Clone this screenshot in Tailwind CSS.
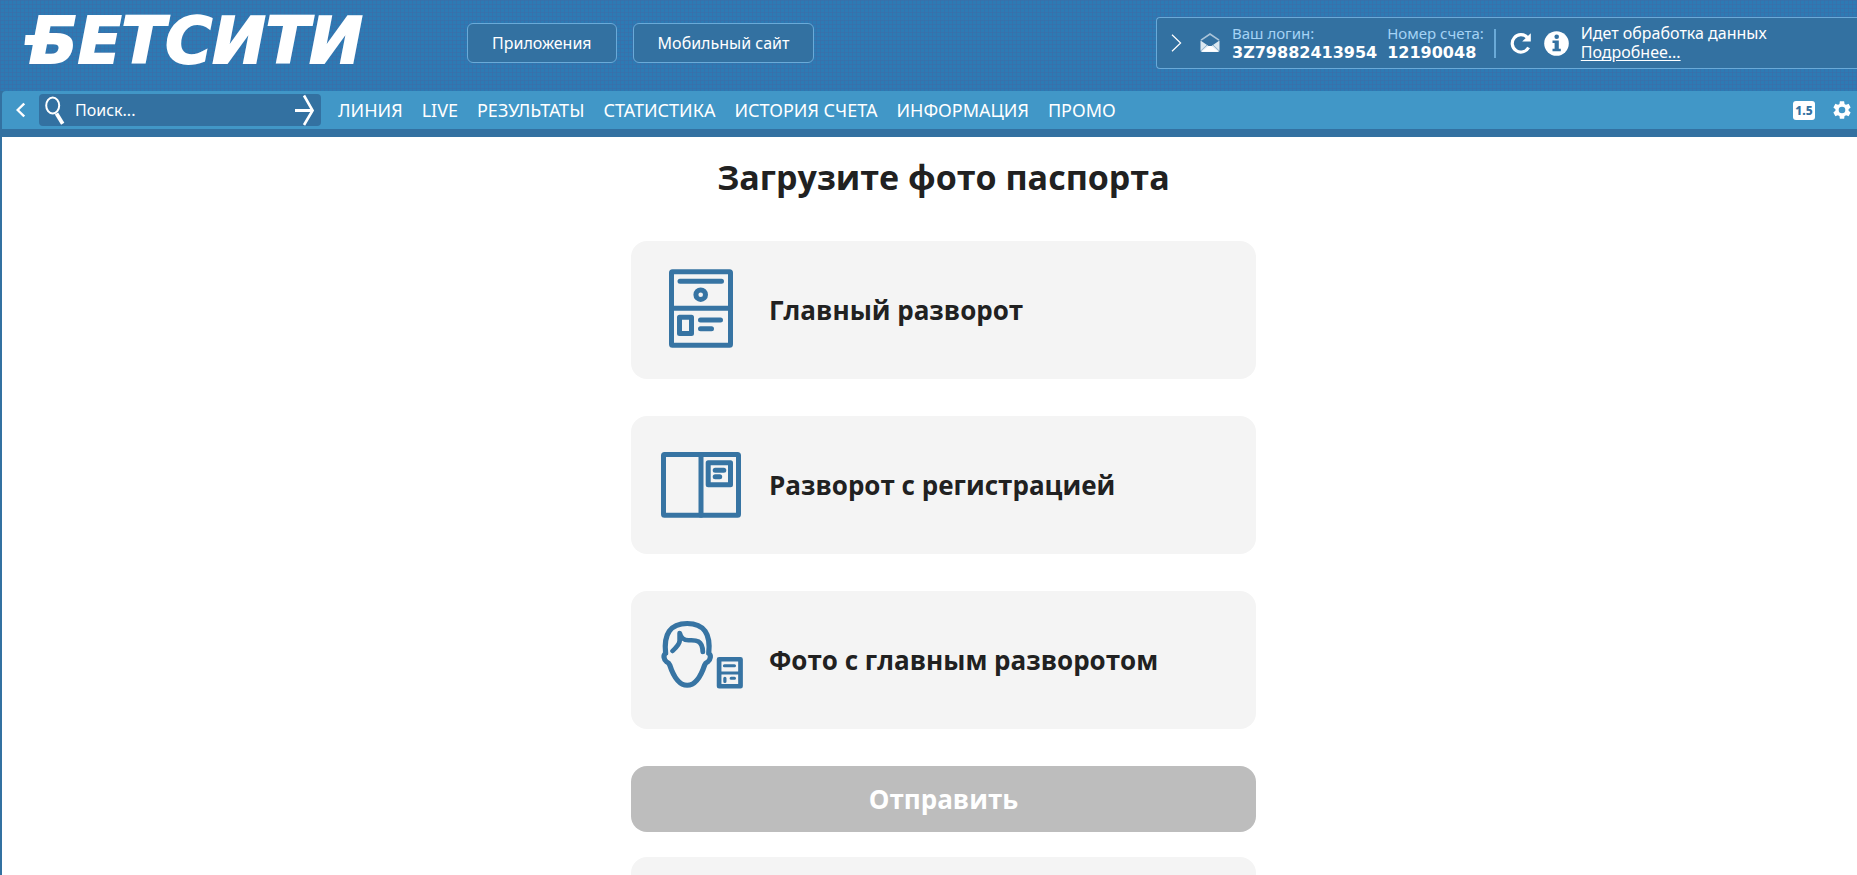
<!DOCTYPE html>
<html lang="ru">
<head>
<meta charset="utf-8">
<title>Загрузите фото паспорта</title>
<script src="https://cdn.jsdelivr.net/npm/@tailwindcss/browser@4"></script>
</head>
<body class="h-screen overflow-hidden bg-[#3371a1] font-['Noto_Sans',sans-serif] text-white">
<div class="flex h-full flex-col overflow-hidden">
  <header class="flex h-[91px] shrink-0 items-start bg-[#2d7ab4] bg-[linear-gradient(90deg,#3b6ea8a0_1px,transparent_1px),linear-gradient(#3b6ea8a0_1px,transparent_1px)] bg-[size:4px_4px]">
    <a href="#" class="relative ml-[29px] mt-[10px] block w-[438px] font-['DejaVu_Sans',sans-serif] text-[64px] leading-[62px] font-bold italic [-webkit-text-stroke:2px_white]">БЕТСИТИ<span class="absolute top-[25px] -left-1 h-[10px] w-5 -skew-x-6 bg-white"></span></a>
    <nav class="mt-[23px] flex gap-4 text-base" aria-label="Версии сайта">
      <a href="#" class="flex h-10 items-center rounded-md border border-[#6aaad8] bg-[#3371a1] px-6">Приложения</a>
      <a href="#" class="flex h-10 items-center rounded-md border border-[#6aaad8] bg-[#3371a1] px-6">Мобильный сайт</a>
    </nav>
    <div class="mt-[17px] ml-auto flex h-[52px] w-[701px] shrink-0 items-center rounded-l-sm border border-r-0 border-[#6aaad8] bg-[#3371a1] pl-[14px] text-base leading-[19px]">
      <button type="button" aria-label="Свернуть"><svg class="block h-[18px] w-[11px]" viewBox="0 0 11 18" fill="none" stroke="#fff" stroke-width="1.2"><path d="M1 .7 9.6 9 1 17.3"/></svg></button>
      <button type="button" aria-label="Сообщения" class="ml-[18px]"><svg class="block h-5 w-5" viewBox="0 0 20 20"><path d="M1 7.2 10 1l9 6.200" fill="none" stroke="#a9c4d9" stroke-width="1.600"/><path d="M.5 7.500 10 14l9.500-6.500V17a2 2 0 0 1-2 2h-15a2 2 0 0 1-2-2z" fill="#dbe8f1"/><path d="M1.500 18.800 8.500 12.900h3l7 5.900z" fill="#fff"/><path d="M.8 17.900 7 12M19.200 17.900 13 12" stroke="#8db2cd" stroke-width="1"/></svg></button>
      <dl class="ml-3 flex gap-[10px]">
        <div><dt class="text-[15px] text-[#a5d3f5]">Ваш логин:</dt><dd class="font-['DejaVu_Sans',sans-serif] font-bold">3Z79882413954</dd></div>
        <div><dt class="text-[15px] text-[#a5d3f5]">Номер счета:</dt><dd class="font-['DejaVu_Sans',sans-serif] font-bold">12190048</dd></div>
      </dl>
      <div class="ml-[10px] h-[29px] w-[2px] bg-[#6aaad8]"></div>
      <button type="button" aria-label="Обновить" class="ml-[14px]"><svg class="block h-[22px] w-[22px]" viewBox="0 0 22 22"><path d="M17.300 5.400A8.700 8.700 0 1 0 18.600 15.500" fill="none" stroke="#fff" stroke-width="3.200"/><path d="M20.800 1.200v8.300h-8.600z" fill="#fff"/></svg></button>
      <svg class="ml-3 block h-[25px] w-[25px] shrink-0" viewBox="0 0 25 25" aria-hidden="true"><circle cx="12.500" cy="12.500" r="12.300" fill="#fff"/><circle cx="12.700" cy="5.700" r="2.300" fill="#3371a1"/><path d="M8.500 9.400h6.300v8.300h2v2.600H8.500v-2.600h2.100v-5.700H8.500z" fill="#3371a1"/></svg>
      <div class="ml-3 whitespace-nowrap"><p>Идет обработка данных</p><a href="#" class="underline underline-offset-2">Подробнее...</a></div>
    </div>
  </header>

  <div class="ml-[2px] flex h-[38px] shrink-0 items-center rounded-tl-sm bg-[#4197c7] pr-1">
    <button type="button" aria-label="Назад" class="ml-[14px]"><svg class="block h-4 w-[9px]" viewBox="0 0 9 16" fill="none" stroke="#fff" stroke-width="2.400"><path d="M8.200 1.500 1.600 8l6.600 6.500"/></svg></button>
    <form class="ml-[14px] flex h-8 w-[282px] shrink-0 items-center rounded-sm bg-[#3371a1] pr-[6px] pl-[6px]">
      <svg class="h-[29px] w-[20px] shrink-0" viewBox="0 0 20 29" fill="none" stroke="#fff" aria-hidden="true"><ellipse cx="7.700" cy="9.500" rx="6.500" ry="8" stroke-width="2"/><path d="M11.500 17.500 17.700 27.700" stroke-width="3.800"/></svg>
      <input type="text" aria-label="Поиск" placeholder="Поиск..." class="ml-[10px] min-w-0 flex-1 bg-transparent text-base text-white outline-none placeholder:text-white">
      <button type="button" aria-label="Найти"><svg class="block h-8 w-5" viewBox="0 0 20 32" fill="none" stroke="#fff"><path d="M0 16.500h18" stroke-width="3"/><path d="M9 1.500 17.600 16.500 9 31" stroke-width="2.600"/></svg></button>
    </form>
    <nav class="ml-[17px] flex gap-[19px] whitespace-nowrap text-lg" aria-label="Меню">
      <a href="#">ЛИНИЯ</a><a href="#">LIVE</a><a href="#">РЕЗУЛЬТАТЫ</a><a href="#">СТАТИСТИКА</a><a href="#">ИСТОРИЯ СЧЕТА</a><a href="#">ИНФОРМАЦИЯ</a><a href="#">ПРОМО</a>
    </nav>
    <button type="button" class="ml-auto h-[19px] w-[22px] rounded-[3px] bg-white text-xs leading-[19px] font-extrabold text-[#3371a1]">1.5</button>
    <button type="button" aria-label="Настройки" class="ml-4"><svg class="block h-[22px] w-[22px]" viewBox="0 0 24 24" fill="#fff"><path d="M19.140 12.940c.04-.3.060-.61.060-.94 0-.32-.02-.64-.07-.94l2.030-1.580a.49.490 0 0 0 .12-.61l-1.920-3.320a.488.488 0 0 0-.59-.22l-2.390.96c-.5-.38-1.030-.7-1.620-.94l-.36-2.540a.484.484 0 0 0-.48-.41h-3.840c-.24 0-.43.170-.47.410l-.36 2.540c-.59.240-1.130.570-1.620.940l-2.390-.96c-.22-.08-.47 0-.59.220L2.740 8.870c-.12.210-.08.470.120.610l2.030 1.580c-.05.300-.09.630-.09.940s.02.640.070.940l-2.030 1.580a.49.490 0 0 0-.12.610l1.920 3.320c.12.220.370.290.590.220l2.390-.96c.5.380 1.030.700 1.620.940l.36 2.540c.05.240.240.410.480.410h3.840c.24 0 .44-.17.470-.41l.36-2.540c.59-.24 1.130-.56 1.620-.94l2.390.96c.22.080.470 0 .59-.22l1.920-3.320c.12-.22.070-.47-.12-.61zM12 15.600A3.600 3.600 0 1 1 12 8.400a3.600 3.600 0 0 1 0 7.200z"/></svg></button>
  </div>

  <main class="mt-2 ml-[2px] flex min-h-0 flex-1 flex-col items-center overflow-hidden bg-white pl-7 text-[#212121]">
    <h1 class="mt-[18px] mb-[42px] shrink-0 font-['Open_Sans',sans-serif] text-[34px] leading-[44px] font-bold">Загрузите фото паспорта</h1>
    <div class="flex w-full max-w-[625px] shrink-0 flex-col gap-[37px] font-['Open_Sans',sans-serif] text-[26px] font-bold">
      <button type="button" class="flex h-[138px] items-center gap-[30px] rounded-2xl bg-[#f4f4f4] pl-7 text-left">
        <svg class="h-20 w-20 shrink-0 overflow-visible" viewBox="0 0 80 80" fill="none" stroke="#3774a3" stroke-width="5" stroke-linecap="round" stroke-linejoin="round" aria-hidden="true"><rect x="12.500" y="1.800" width="59" height="73.500" rx="1"/><path d="M21 11.300h41.500M12.500 38.300h59M41.500 50h20M41.500 58.700h11"/><circle cx="41.700" cy="24.700" r="4.800"/><rect x="20.500" y="47.200" width="12" height="16.300"/></svg>
        Главный разворот
      </button>
      <button type="button" class="flex h-[138px] items-center gap-[30px] rounded-2xl bg-[#f4f4f4] pl-7 text-left">
        <svg class="h-20 w-20 shrink-0 overflow-visible" viewBox="0 0 80 80" fill="none" stroke="#3774a3" stroke-width="5" stroke-linecap="round" stroke-linejoin="round" aria-hidden="true"><rect x="4.500" y="9.500" width="75" height="60.700" rx="1"/><path d="M42 9.500v60.700M56.200 25.300h8.600M56.200 31.700h4.500"/><rect x="49.200" y="17.800" width="22.300" height="22"/></svg>
        Разворот с регистрацией
      </button>
      <button type="button" class="flex h-[138px] items-center gap-[30px] rounded-2xl bg-[#f4f4f4] pl-7 text-left">
        <svg class="h-20 w-20 shrink-0 overflow-visible" viewBox="0 0 80 80" fill="none" stroke="#3774a3" stroke-linecap="round" stroke-linejoin="round" aria-hidden="true"><g transform="translate(2.800) scale(1.071 1)"><path stroke-width="4.900" d="M3.600 33.500C1.500 14 8 3.500 23.700 3.500S45.900 14 43.800 33.500c2.600 1.500 1.600 6.500-.8 8.200-1.800.8-2.400 1.300-3 3.300C36 58 31 65.300 23.700 65.300S11.400 58 7.400 45c-.6-2-1.200-2.500-3-3.300C2 40 1 35 3.600 33.500z"/><path stroke-width="4.500" d="M10 31c4-4 6.700-7.500 6.700-10.500v-7.500c1 4.500 3.600 7.300 8.300 7.300 7-.5 13-.3 13.300 11.700"/><rect x="53.500" y="39.200" width="20" height="27" stroke-width="4.400"/><path stroke-width="3" d="M54 53h19M58.500 45.700h9.300M64.800 58.300h3M58.900 58.200v3.300"/></g></svg>
        Фото с главным разворотом
      </button>
      <button type="button" class="h-[66px] rounded-2xl bg-[#bdbdbd] text-center text-white">Отправить</button>
    </div>
    <section class="mt-[25px] h-[138px] w-full max-w-[625px] shrink-0 rounded-2xl bg-[#f4f4f4]" aria-label="Дополнительно"></section>
  </main>
</div>
</body>
</html>
